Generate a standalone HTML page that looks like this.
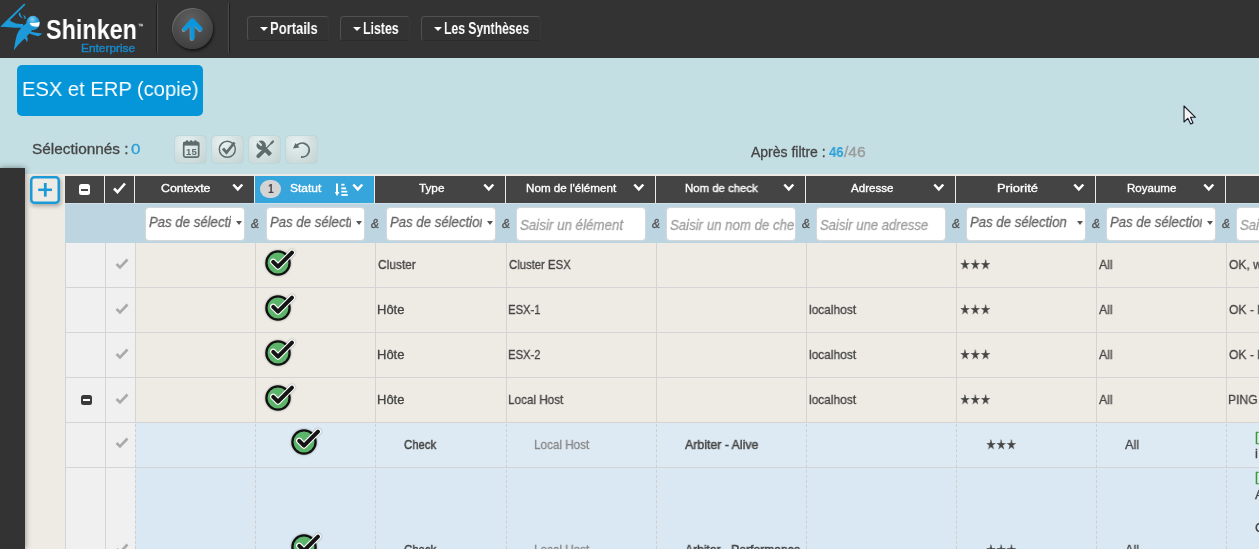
<!DOCTYPE html>
<html><head><meta charset="utf-8">
<style>
*{box-sizing:border-box;margin:0;padding:0}
html,body{width:1259px;height:549px;overflow:hidden;background:#c3dfe3;font-family:"Liberation Sans",sans-serif;color:#444}
.abs{position:absolute}
.tx{position:absolute;white-space:nowrap;line-height:normal;will-change:transform}
#nav{position:absolute;left:0;top:0;width:1259px;height:58px;background:#333}
.sep{position:absolute;top:3px;width:2px;height:50px}
.menu{position:absolute;top:16px;height:25px;border:1px solid #505050;border-bottom-color:#2c2c2c;border-right-color:#383838;border-radius:4px}
.car{position:absolute;width:0;height:0;border-left:4px solid transparent;border-right:4px solid transparent;border-top:4px solid #fff}
#title{position:absolute;left:17px;top:65px;width:186px;height:51px;background:#0596d9;border-radius:5px}
.tbtn{position:absolute;top:136px;width:31px;height:27px;border-radius:4px;background:radial-gradient(ellipse at 35% 25%,#e8f1f1 0%,#d5e1e1 50%,#c4d2d2 100%);box-shadow:0 0 1px rgba(0,0,0,.3)}
#side{position:absolute;left:0;top:168px;width:25px;height:381px;background:#333;box-shadow:0 0 6px rgba(0,0,0,.45)}
#beige{position:absolute;left:25px;top:174px;width:1234px;height:375px;background:#eeebe5}
.th{position:absolute;top:176px;height:27px;background:#444}
.chev{position:absolute;top:183px}
.filt{position:absolute;left:65px;top:203px;width:1194px;height:40px;background:#bdd5e0;border-top:1px solid #d0e0e8}
.inp{position:absolute;top:207px;height:34px;background:#fff;border:1px solid #d4d8da;border-radius:4px;overflow:hidden}
.clip{position:absolute;overflow:hidden;white-space:nowrap}
</style></head><body>
<div id="nav">
  <svg class="abs" style="left:0;top:0" width="46" height="57" viewBox="0 0 46 57">
    <defs><radialGradient id="hg" cx="0.45" cy="0.25" r="0.8"><stop offset="0" stop-color="#8fd0f2"/><stop offset="0.45" stop-color="#1f9ddc"/><stop offset="1" stop-color="#1a92d0"/></radialGradient></defs>
    <g fill="#1c9ad9">
      <path d="M24.2 3.5 L25.4 4.7 L7.5 22.5 L3 26.8 L0.3 26.8 L5 22 Z"/>
      <path d="M5 23 L8.7 19.5 Q12 22.3 16 23.6 Q19.5 24.3 23 24 L24 27.5 Q18 28 12 27.5 Q5 27 0.6 26.8 Z"/>
      <path d="M27 23 Q19.5 27.5 16.8 35 Q15 42 13.7 50.5 Q18.5 44 23 40 Q28 35.5 32 30.5 Z"/>
      <path d="M27.3 30.8 Q35 33 42.3 33.6 Q40.5 35.5 38.3 36.2 Q33 35.5 29.5 33.6 Z"/>
      <path d="M22 34.3 Q26 35 27.5 37.5 Q28.3 40 26.9 42.3 Q26.2 39.5 23.5 37.2 Z"/>
      <path d="M18.7 12.9 Q18.6 16.5 21.5 17.8 L23.5 18.3 Q20.3 16.5 20.2 12.6 Z"/>
      <path d="M23.5 15 Q25.8 15.8 26 18.8 L24.3 18.8 Q24.5 16.8 23.3 15.6Z"/>
    </g>
    <ellipse cx="33" cy="23" rx="6.8" ry="7.2" fill="url(#hg)"/>
    <path d="M29.6 23 Q35 23.3 39.6 22 Q39.6 25.5 38.5 26.6 Q35 26.8 32 26.1 Q30.3 25 29.6 23Z" fill="#fff"/>
  </svg>
  <div class="sep" style="left:156px;background:linear-gradient(90deg,#1e1e1e 50%,#4a4a4a 50%)"></div>
  <div class="sep" style="left:228px;background:linear-gradient(90deg,#4a4a4a 50%,#1e1e1e 50%)"></div>
  <div class="abs" style="left:172px;top:8px;width:41px;height:41px;border-radius:50%;background:radial-gradient(circle at 45% 30%,#606060,#3e3e3e 80%);box-shadow:1px 2px 3px rgba(0,0,0,.6),inset 1px 1px 0 rgba(255,255,255,.14)"></div>
  <svg class="abs" style="left:172px;top:8px" width="41" height="41" viewBox="0 0 41 41">
    <path d="M20.5 30 L20.5 13 M12.5 21 L20.5 12.5 L28.5 21" stroke="#bbb" stroke-width="4.3" fill="none" stroke-linecap="round" stroke-linejoin="round" transform="translate(-0.7,0.9)" opacity=".6"/>
    <path d="M20.5 30 L20.5 13 M12.5 21 L20.5 12.5 L28.5 21" stroke="#0a97dd" stroke-width="4.3" fill="none" stroke-linecap="round" stroke-linejoin="round"/>
  </svg>
  <div class="menu" style="left:247px;width:82px"></div>
  <div class="menu" style="left:340px;width:70px"></div>
  <div class="menu" style="left:421px;width:120px"></div>
  <span class="car" style="left:260px;top:27px"></span>
  <span class="car" style="left:353px;top:27px"></span>
  <span class="car" style="left:434px;top:27px"></span>
</div>

<span class="tx" style="left:46.00px;top:14px;font-size:28px;color:#fff;font-weight:bold;transform:scaleX(0.8348);transform-origin:0 0">Shinken</span>
<span class="tx" style="left:138.00px;top:23px;font-size:6px;color:#ccc;transform:scaleX(0.8333);transform-origin:0 0;-webkit-text-stroke:0.3px #ccc">™</span>
<span class="tx" style="left:81.00px;top:42px;font-size:11px;color:#1a86c4;transform:scaleX(1.0797);transform-origin:0 0;-webkit-text-stroke:0.45px #1a86c4">Enterprise</span>
<span class="tx" style="left:270.19px;top:20px;font-size:16px;color:#fff;font-weight:bold;transform:scaleX(0.8133);transform-origin:0 0">Portails</span>
<span class="tx" style="left:362.93px;top:20px;font-size:16px;color:#fff;font-weight:bold;transform:scaleX(0.7719);transform-origin:0 0">Listes</span>
<span class="tx" style="left:443.64px;top:20px;font-size:16px;color:#fff;font-weight:bold;transform:scaleX(0.7593);transform-origin:0 0">Les Synthèses</span>
<div id="title"></div>
<span class="tx" style="left:22.04px;top:77px;font-size:21px;color:#fff;transform:scaleX(0.9594);transform-origin:0 0">ESX et ERP (copie)</span>
<span class="tx" style="left:32.00px;top:140px;font-size:15px;color:#454545;transform:scaleX(1.0252);transform-origin:0 0;-webkit-text-stroke:0.3px #454545">Sélectionnés :</span>
<span class="tx" style="left:131.20px;top:140px;font-size:15px;color:#2a9fd8;transform:scaleX(1.1250);transform-origin:0 0;-webkit-text-stroke:0.3px #2a9fd8">0</span>
<div class="tbtn" style="left:175px"><svg width="31" height="28" viewBox="0 0 31 28" style="position:absolute;left:0;top:-1px"><rect x="8.7" y="7.3" width="15" height="14.8" rx="1.6" fill="none" stroke="#5e6c6c" stroke-width="1.7"/><rect x="8.2" y="7" width="16" height="3.6" fill="#5e6c6c"/><circle cx="12" cy="6.6" r="1.3" fill="#5e6c6c"/><circle cx="16.2" cy="6.6" r="1.3" fill="#5e6c6c"/><circle cx="20.4" cy="6.6" r="1.3" fill="#5e6c6c"/><text x="16.4" y="19.6" text-anchor="middle" font-family="Liberation Sans" font-weight="bold" font-size="9.5" fill="#5e6c6c" style="will-change:transform">15</text></svg></div>
<div class="tbtn" style="left:212px"><svg width="31" height="28" viewBox="0 0 31 28" style="position:absolute;left:0;top:-1px"><circle cx="15.3" cy="14.3" r="8" fill="none" stroke="#5e6c6c" stroke-width="1.5"/><path d="M11 13.5 L14.5 17.5 L22.5 7.5" fill="none" stroke="#5e6c6c" stroke-width="2.8"/></svg></div>
<div class="tbtn" style="left:249px"><svg width="31" height="28" viewBox="0 0 31 28" style="position:absolute;left:0;top:-1px"><path d="M13 11 L21.5 19.8" stroke="#5e6c6c" stroke-width="4.2"/><circle cx="12.2" cy="10.2" r="4.7" fill="#5e6c6c"/><path d="M8 6 L12 10" stroke="#d6e2e2" stroke-width="2.4" stroke-linecap="round"/><path d="M23.5 7 L16 14.5" stroke="#5e6c6c" stroke-width="1.3"/><path d="M22.3 8.2 L24 6.5" stroke="#5e6c6c" stroke-width="2.2" stroke-linecap="round"/><path d="M16.2 14.5 L9.3 21.2" stroke="#5e6c6c" stroke-width="3.8" stroke-linecap="round"/></svg></div>
<div class="tbtn" style="left:286px"><svg width="31" height="28" viewBox="0 0 31 28" style="position:absolute;left:0;top:-1px"><path d="M10.5 11 A7 7 0 1 1 15 22" fill="none" stroke="#5e6c6c" stroke-width="1.8"/><path d="M7 13.5 L9.5 8 L13.5 12.5 Z" fill="#5e6c6c"/></svg></div>
<span class="tx" style="left:751.00px;top:144px;font-size:14px;color:#454545;-webkit-text-stroke:0.3px #454545">Après filtre :</span>
<span class="tx" style="left:829.00px;top:144px;font-size:14px;color:#2a9fd8;font-weight:bold;transform:scaleX(0.9375);transform-origin:0 0">46</span>
<span class="tx" style="left:844.00px;top:144px;font-size:14px;color:#9a9a9a;transform:scaleX(1.1181);transform-origin:0 0;-webkit-text-stroke:0.3px #9a9a9a">/46</span>
<svg class="abs" style="left:1182.5px;top:104.5px" width="15" height="22" viewBox="0 0 15 22">
  <path d="M1 1 L1 17 L4.8 13.3 L7.6 19 L10 18 L7.5 12.3 L12.5 12.3 Z" fill="#f4f4f4" stroke="#1a1a2a" stroke-width="1.1" stroke-linejoin="round"/>
</svg>
<div id="beige"></div><div id="side"></div>
<div class="abs" style="left:30px;top:176px;width:30px;height:28px;border-radius:4px;background:#eeebe5;box-shadow:1px 2px 4px rgba(0,0,0,.3)"></div>
<svg class="abs" style="left:30px;top:176px" width="30" height="28" viewBox="0 0 30 28"><rect x="1.25" y="1.25" width="27.5" height="25.5" rx="3" fill="none" stroke="#1a9ad6" stroke-width="2.5"/><path d="M8.2 13.8 L22 13.8" stroke="#1a9ad6" stroke-width="2.5"/><path d="M15.3 7 L15.3 20.6" stroke="#1a9ad6" stroke-width="2.8"/></svg>
<div class="th" style="left:65px;width:39px;background:#444"></div>
<div class="th" style="left:105px;width:29px;background:#444"></div>
<div class="th" style="left:135px;width:119px;background:#444"></div>
<div class="th" style="left:255px;width:119px;background:#35a5dc"></div>
<div class="th" style="left:375px;width:130px;background:#444"></div>
<div class="th" style="left:506px;width:149px;background:#444"></div>
<div class="th" style="left:656px;width:149px;background:#444"></div>
<div class="th" style="left:806px;width:149px;background:#444"></div>
<div class="th" style="left:956px;width:139px;background:#444"></div>
<div class="th" style="left:1096px;width:129px;background:#444"></div>
<div class="th" style="left:1226px;width:33px;background:#444"></div>
<span class="tx" style="left:161.00px;top:182px;font-size:11.5px;color:#fff;transform:scaleX(1.0738);transform-origin:0 0;-webkit-text-stroke:0.35px #fff">Contexte</span>
<span class="tx" style="left:290.40px;top:182px;font-size:11.5px;color:#fff;transform:scaleX(1.0437);transform-origin:0 0;-webkit-text-stroke:0.35px #fff">Statut</span>
<span class="tx" style="left:419.00px;top:182px;font-size:11.5px;color:#fff;transform:scaleX(1.0189);transform-origin:0 0;-webkit-text-stroke:0.35px #fff">Type</span>
<span class="tx" style="left:526.00px;top:182px;font-size:11.5px;color:#fff;transform:scaleX(1.0119);transform-origin:0 0;-webkit-text-stroke:0.35px #fff">Nom de l'élément</span>
<span class="tx" style="left:685.00px;top:182px;font-size:11.5px;color:#fff;transform:scaleX(0.9898);transform-origin:0 0;-webkit-text-stroke:0.35px #fff">Nom de check</span>
<span class="tx" style="left:851.00px;top:182px;font-size:11.5px;color:#fff;transform:scaleX(1.0050);transform-origin:0 0;-webkit-text-stroke:0.35px #fff">Adresse</span>
<span class="tx" style="left:996.60px;top:182px;font-size:11.5px;color:#fff;transform:scaleX(1.1241);transform-origin:0 0;-webkit-text-stroke:0.35px #fff">Priorité</span>
<span class="tx" style="left:1127.00px;top:182px;font-size:11.5px;color:#fff;transform:scaleX(1.0037);transform-origin:0 0;-webkit-text-stroke:0.35px #fff">Royaume</span>
<svg class="chev" style="left:232.0px" width="12" height="9" viewBox="0 0 12 9"><path d="M1.3 1.5 L5.8 6.3 L10.3 1.5" stroke="#fff" stroke-width="2.5" fill="none"/></svg>
<svg class="chev" style="left:352.1px" width="12" height="9" viewBox="0 0 12 9"><path d="M1.3 1.5 L5.8 6.3 L10.3 1.5" stroke="#fff" stroke-width="2.5" fill="none"/></svg>
<svg class="chev" style="left:483.0px" width="12" height="9" viewBox="0 0 12 9"><path d="M1.3 1.5 L5.8 6.3 L10.3 1.5" stroke="#fff" stroke-width="2.5" fill="none"/></svg>
<svg class="chev" style="left:632.7px" width="12" height="9" viewBox="0 0 12 9"><path d="M1.3 1.5 L5.8 6.3 L10.3 1.5" stroke="#fff" stroke-width="2.5" fill="none"/></svg>
<svg class="chev" style="left:783.2px" width="12" height="9" viewBox="0 0 12 9"><path d="M1.3 1.5 L5.8 6.3 L10.3 1.5" stroke="#fff" stroke-width="2.5" fill="none"/></svg>
<svg class="chev" style="left:932.7px" width="12" height="9" viewBox="0 0 12 9"><path d="M1.3 1.5 L5.8 6.3 L10.3 1.5" stroke="#fff" stroke-width="2.5" fill="none"/></svg>
<svg class="chev" style="left:1072.9px" width="12" height="9" viewBox="0 0 12 9"><path d="M1.3 1.5 L5.8 6.3 L10.3 1.5" stroke="#fff" stroke-width="2.5" fill="none"/></svg>
<svg class="chev" style="left:1202.5px" width="12" height="9" viewBox="0 0 12 9"><path d="M1.3 1.5 L5.8 6.3 L10.3 1.5" stroke="#fff" stroke-width="2.5" fill="none"/></svg>
<div class="abs" style="left:79px;top:184px;width:11px;height:11px;background:#fff;border-radius:2.5px"><div class="abs" style="left:2px;top:4.5px;width:7px;height:2px;background:#444"></div></div>
<svg class="abs" style="left:112px;top:181px" width="15" height="14" viewBox="0 0 15 14"><path d="M2 7.5 L5.5 11 L13 2.5" stroke="#fff" stroke-width="2.6" fill="none"/></svg>
<div class="abs" style="left:260px;top:180px;width:21px;height:18px;border-radius:9px;background:#d4d4d4"></div>
<span class="tx" style="left:268.00px;top:181px;font-size:13px;color:#444;font-weight:bold;transform:scaleX(0.8000);transform-origin:0 0">1</span>
<svg class="abs" style="left:334px;top:183px" width="16" height="14" viewBox="0 0 16 14"><path d="M3 0.6 L3 10" stroke="#fff" stroke-width="2"/><path d="M0.8 9 L3 13 L5.4 9 Z" fill="#fff"/><rect x="7.3" y="0.8" width="3.2" height="1.8" fill="#fff"/><rect x="7.3" y="4.4" width="4.7" height="1.9" fill="#fff"/><rect x="7.3" y="7.8" width="6" height="1.7" fill="#fff"/><rect x="7.3" y="11.1" width="6.5" height="1.8" fill="#fff"/></svg>
<div class="filt"></div>
<div class="inp" style="left:145px;width:100px"></div>
<div class="clip" style="left:146px;top:208px;width:85px;height:31px"><span class="tx" style="left:2.50px;top:6px;font-size:14px;color:#666;font-style:italic;transform:scaleX(0.9420);transform-origin:0 0;-webkit-text-stroke:0.3px #666">Pas de sélection</span></div>
<span class="car" style="left:235.6px;top:221px;border-left-width:3.8px;border-right-width:3.8px;border-top:4.6px solid #555"></span>
<div class="inp" style="left:266px;width:99px"></div>
<div class="clip" style="left:267px;top:208px;width:84px;height:31px"><span class="tx" style="left:2.50px;top:6px;font-size:14px;color:#666;font-style:italic;transform:scaleX(0.9420);transform-origin:0 0;-webkit-text-stroke:0.3px #666">Pas de sélection</span></div>
<span class="car" style="left:355.6px;top:221px;border-left-width:3.8px;border-right-width:3.8px;border-top:4.6px solid #555"></span>
<div class="inp" style="left:386px;width:110px"></div>
<div class="clip" style="left:387px;top:208px;width:95px;height:31px"><span class="tx" style="left:2.50px;top:6px;font-size:14px;color:#666;font-style:italic;transform:scaleX(0.9420);transform-origin:0 0;-webkit-text-stroke:0.3px #666">Pas de sélection</span></div>
<span class="car" style="left:486.6px;top:221px;border-left-width:3.8px;border-right-width:3.8px;border-top:4.6px solid #555"></span>
<div class="inp" style="left:516px;width:130px"></div>
<div class="clip" style="left:517px;top:208px;width:127px;height:31px"><span class="tx" style="left:2.50px;top:9px;font-size:14px;color:#a0a0a0;font-style:italic;transform:scaleX(0.9530);transform-origin:0 0;-webkit-text-stroke:0.3px #a0a0a0">Saisir un élément</span></div>
<div class="inp" style="left:666px;width:130px"></div>
<div class="clip" style="left:667px;top:208px;width:127px;height:31px"><span class="tx" style="left:2.50px;top:9px;font-size:14px;color:#a0a0a0;font-style:italic;transform:scaleX(0.9450);transform-origin:0 0;-webkit-text-stroke:0.3px #a0a0a0">Saisir un nom de check</span></div>
<div class="inp" style="left:816px;width:130px"></div>
<div class="clip" style="left:817px;top:208px;width:127px;height:31px"><span class="tx" style="left:2.50px;top:9px;font-size:14px;color:#a0a0a0;font-style:italic;transform:scaleX(0.9320);transform-origin:0 0;-webkit-text-stroke:0.3px #a0a0a0">Saisir une adresse</span></div>
<div class="inp" style="left:966px;width:120px"></div>
<div class="clip" style="left:967px;top:208px;width:105px;height:31px"><span class="tx" style="left:2.50px;top:6px;font-size:14px;color:#666;font-style:italic;transform:scaleX(0.9420);transform-origin:0 0;-webkit-text-stroke:0.3px #666">Pas de sélection</span></div>
<span class="car" style="left:1076.6px;top:221px;border-left-width:3.8px;border-right-width:3.8px;border-top:4.6px solid #555"></span>
<div class="inp" style="left:1106px;width:110px"></div>
<div class="clip" style="left:1107px;top:208px;width:95px;height:31px"><span class="tx" style="left:2.50px;top:6px;font-size:14px;color:#666;font-style:italic;transform:scaleX(0.9420);transform-origin:0 0;-webkit-text-stroke:0.3px #666">Pas de sélection</span></div>
<span class="car" style="left:1206.6px;top:221px;border-left-width:3.8px;border-right-width:3.8px;border-top:4.6px solid #555"></span>
<div class="inp" style="left:1236px;width:65px"></div>
<div class="clip" style="left:1237px;top:208px;width:62px;height:31px"><span class="tx" style="left:2.50px;top:9px;font-size:14px;color:#a0a0a0;font-style:italic;transform:scaleX(0.9450);transform-origin:0 0;-webkit-text-stroke:0.3px #a0a0a0">Saisir un message</span></div>
<span class="tx" style="left:251.00px;top:217px;font-size:12px;color:#555;font-style:italic;-webkit-text-stroke:0.3px #555">&amp;</span>
<span class="tx" style="left:371.00px;top:217px;font-size:12px;color:#555;font-style:italic;-webkit-text-stroke:0.3px #555">&amp;</span>
<span class="tx" style="left:502.00px;top:217px;font-size:12px;color:#555;font-style:italic;-webkit-text-stroke:0.3px #555">&amp;</span>
<span class="tx" style="left:652.00px;top:217px;font-size:12px;color:#555;font-style:italic;-webkit-text-stroke:0.3px #555">&amp;</span>
<span class="tx" style="left:802.00px;top:217px;font-size:12px;color:#555;font-style:italic;-webkit-text-stroke:0.3px #555">&amp;</span>
<span class="tx" style="left:952.00px;top:217px;font-size:12px;color:#555;font-style:italic;-webkit-text-stroke:0.3px #555">&amp;</span>
<span class="tx" style="left:1092.00px;top:217px;font-size:12px;color:#555;font-style:italic;-webkit-text-stroke:0.3px #555">&amp;</span>
<span class="tx" style="left:1222.00px;top:217px;font-size:12px;color:#555;font-style:italic;-webkit-text-stroke:0.3px #555">&amp;</span>
<div class="abs" style="left:65px;top:243px;width:1194px;height:45px;background:#eeebe5;border-bottom:1px solid #d4d4d4"></div>
<div class="abs" style="left:65px;top:243px;width:70px;height:45px;background:#f0f0f0;border-bottom:1px solid #d4d4d4"></div>
<div class="abs" style="left:65px;top:288px;width:1194px;height:45px;background:#eeebe5;border-bottom:1px solid #d4d4d4"></div>
<div class="abs" style="left:65px;top:288px;width:70px;height:45px;background:#f0f0f0;border-bottom:1px solid #d4d4d4"></div>
<div class="abs" style="left:65px;top:333px;width:1194px;height:45px;background:#eeebe5;border-bottom:1px solid #d4d4d4"></div>
<div class="abs" style="left:65px;top:333px;width:70px;height:45px;background:#f0f0f0;border-bottom:1px solid #d4d4d4"></div>
<div class="abs" style="left:65px;top:378px;width:1194px;height:45px;background:#eeebe5;border-bottom:1px solid #d4d4d4"></div>
<div class="abs" style="left:65px;top:378px;width:70px;height:45px;background:#f0f0f0;border-bottom:1px solid #d4d4d4"></div>
<div class="abs" style="left:65px;top:423px;width:1194px;height:45px;background:#deeaf3;border-bottom:1px solid #d4d4d4"></div>
<div class="abs" style="left:65px;top:423px;width:70px;height:45px;background:#f0f0f0;border-bottom:1px solid #d4d4d4"></div>
<div class="abs" style="left:65px;top:468px;width:1194px;height:81px;background:#d9e8f3;"></div>
<div class="abs" style="left:65px;top:468px;width:70px;height:81px;background:#f0f0f0;"></div>
<div class="abs" style="left:65px;top:243px;width:1px;height:306px;background:#d4d4d4"></div>
<div class="abs" style="left:105px;top:243px;width:1px;height:306px;background:#d4d4d4"></div>
<div class="abs" style="left:135px;top:243px;width:1px;height:180px;background:#d4d4d4"></div>
<div class="abs" style="left:135px;top:424px;width:0;height:125px;border-left:1px dashed #cfcfcf"></div>
<div class="abs" style="left:255px;top:243px;width:1px;height:180px;background:#d4d4d4"></div>
<div class="abs" style="left:255px;top:424px;width:0;height:125px;border-left:1px dashed #cfcfcf"></div>
<div class="abs" style="left:375px;top:243px;width:1px;height:180px;background:#d4d4d4"></div>
<div class="abs" style="left:375px;top:424px;width:0;height:125px;border-left:1px dashed #cfcfcf"></div>
<div class="abs" style="left:506px;top:243px;width:1px;height:180px;background:#d4d4d4"></div>
<div class="abs" style="left:506px;top:424px;width:0;height:125px;border-left:1px dashed #cfcfcf"></div>
<div class="abs" style="left:656px;top:243px;width:1px;height:180px;background:#d4d4d4"></div>
<div class="abs" style="left:656px;top:424px;width:0;height:125px;border-left:1px dashed #cfcfcf"></div>
<div class="abs" style="left:806px;top:243px;width:1px;height:180px;background:#d4d4d4"></div>
<div class="abs" style="left:806px;top:424px;width:0;height:125px;border-left:1px dashed #cfcfcf"></div>
<div class="abs" style="left:956px;top:243px;width:1px;height:180px;background:#d4d4d4"></div>
<div class="abs" style="left:956px;top:424px;width:0;height:125px;border-left:1px dashed #cfcfcf"></div>
<div class="abs" style="left:1096px;top:243px;width:1px;height:180px;background:#d4d4d4"></div>
<div class="abs" style="left:1096px;top:424px;width:0;height:125px;border-left:1px dashed #cfcfcf"></div>
<div class="abs" style="left:1226px;top:243px;width:1px;height:180px;background:#d4d4d4"></div>
<div class="abs" style="left:1226px;top:424px;width:0;height:125px;border-left:1px dashed #cfcfcf"></div>
<svg class="abs" style="left:114.7px;top:257.8px" width="14" height="12" viewBox="0 0 14 12"><path d="M1.5 6 L5 9.5 L12.5 1.5" stroke="#aaa" stroke-width="2.6" fill="none"/></svg>
<svg class="abs" style="left:265.3px;top:246.8px;filter:drop-shadow(0 0.5px 1px rgba(0,0,0,.35))" width="34" height="32" viewBox="0 0 34 32"><circle cx="13" cy="16" r="11.6" fill="#5db46b" stroke="#111" stroke-width="2.3"/><path d="M8.2 14.8 L13 19.6 L27 5.6" stroke="#fff" stroke-width="6.2" fill="none" stroke-linecap="round" stroke-linejoin="round"/><path d="M8.2 14.8 L13 19.6 L27 5.6" stroke="#141414" stroke-width="4" fill="none" stroke-linecap="round" stroke-linejoin="round"/></svg>
<span class="tx" style="left:378.00px;top:257px;font-size:13px;color:#444;transform:scaleX(0.9200);transform-origin:0 0;-webkit-text-stroke:0.3px #444">Cluster</span>
<span class="tx" style="left:509.00px;top:257px;font-size:13px;color:#444;transform:scaleX(0.8716);transform-origin:0 0;-webkit-text-stroke:0.3px #444">Cluster ESX</span>
<span class="tx" style="left:959.70px;top:257px;font-size:13px;color:#444;transform:scaleX(0.8571);transform-origin:0 0;-webkit-text-stroke:0.3px #444">★★★</span>
<span class="tx" style="left:1099.00px;top:257px;font-size:13px;color:#444;transform:scaleX(0.9479);transform-origin:0 0;-webkit-text-stroke:0.3px #444">All</span>
<div class="clip" style="left:1227px;top:254px;width:32px;height:20px"><span class="tx" style="left:2.00px;top:3px;font-size:13px;color:#444;transform:scaleX(0.9300);transform-origin:0 0;-webkit-text-stroke:0.3px #444">OK, w</span></div>
<svg class="abs" style="left:114.7px;top:302.8px" width="14" height="12" viewBox="0 0 14 12"><path d="M1.5 6 L5 9.5 L12.5 1.5" stroke="#aaa" stroke-width="2.6" fill="none"/></svg>
<svg class="abs" style="left:265.3px;top:291.8px;filter:drop-shadow(0 0.5px 1px rgba(0,0,0,.35))" width="34" height="32" viewBox="0 0 34 32"><circle cx="13" cy="16" r="11.6" fill="#5db46b" stroke="#111" stroke-width="2.3"/><path d="M8.2 14.8 L13 19.6 L27 5.6" stroke="#fff" stroke-width="6.2" fill="none" stroke-linecap="round" stroke-linejoin="round"/><path d="M8.2 14.8 L13 19.6 L27 5.6" stroke="#141414" stroke-width="4" fill="none" stroke-linecap="round" stroke-linejoin="round"/></svg>
<span class="tx" style="left:377.00px;top:302px;font-size:13px;color:#444;-webkit-text-stroke:0.3px #444">Hôte</span>
<span class="tx" style="left:508.13px;top:302px;font-size:13px;color:#444;transform:scaleX(0.8668);transform-origin:0 0;-webkit-text-stroke:0.3px #444">ESX-1</span>
<span class="tx" style="left:809.00px;top:302px;font-size:13px;color:#444;transform:scaleX(0.9169);transform-origin:0 0;-webkit-text-stroke:0.3px #444">localhost</span>
<span class="tx" style="left:959.70px;top:302px;font-size:13px;color:#444;transform:scaleX(0.8571);transform-origin:0 0;-webkit-text-stroke:0.3px #444">★★★</span>
<span class="tx" style="left:1099.00px;top:302px;font-size:13px;color:#444;transform:scaleX(0.9479);transform-origin:0 0;-webkit-text-stroke:0.3px #444">All</span>
<div class="clip" style="left:1227px;top:299px;width:32px;height:20px"><span class="tx" style="left:2.00px;top:3px;font-size:13px;color:#444;transform:scaleX(0.9300);transform-origin:0 0;-webkit-text-stroke:0.3px #444">OK - l</span></div>
<svg class="abs" style="left:114.7px;top:347.8px" width="14" height="12" viewBox="0 0 14 12"><path d="M1.5 6 L5 9.5 L12.5 1.5" stroke="#aaa" stroke-width="2.6" fill="none"/></svg>
<svg class="abs" style="left:265.3px;top:336.8px;filter:drop-shadow(0 0.5px 1px rgba(0,0,0,.35))" width="34" height="32" viewBox="0 0 34 32"><circle cx="13" cy="16" r="11.6" fill="#5db46b" stroke="#111" stroke-width="2.3"/><path d="M8.2 14.8 L13 19.6 L27 5.6" stroke="#fff" stroke-width="6.2" fill="none" stroke-linecap="round" stroke-linejoin="round"/><path d="M8.2 14.8 L13 19.6 L27 5.6" stroke="#141414" stroke-width="4" fill="none" stroke-linecap="round" stroke-linejoin="round"/></svg>
<span class="tx" style="left:377.00px;top:347px;font-size:13px;color:#444;-webkit-text-stroke:0.3px #444">Hôte</span>
<span class="tx" style="left:508.13px;top:347px;font-size:13px;color:#444;transform:scaleX(0.8668);transform-origin:0 0;-webkit-text-stroke:0.3px #444">ESX-2</span>
<span class="tx" style="left:809.00px;top:347px;font-size:13px;color:#444;transform:scaleX(0.9169);transform-origin:0 0;-webkit-text-stroke:0.3px #444">localhost</span>
<span class="tx" style="left:959.70px;top:347px;font-size:13px;color:#444;transform:scaleX(0.8571);transform-origin:0 0;-webkit-text-stroke:0.3px #444">★★★</span>
<span class="tx" style="left:1099.00px;top:347px;font-size:13px;color:#444;transform:scaleX(0.9479);transform-origin:0 0;-webkit-text-stroke:0.3px #444">All</span>
<div class="clip" style="left:1227px;top:344px;width:32px;height:20px"><span class="tx" style="left:2.00px;top:3px;font-size:13px;color:#444;transform:scaleX(0.9300);transform-origin:0 0;-webkit-text-stroke:0.3px #444">OK - l</span></div>
<svg class="abs" style="left:114.7px;top:392.8px" width="14" height="12" viewBox="0 0 14 12"><path d="M1.5 6 L5 9.5 L12.5 1.5" stroke="#aaa" stroke-width="2.6" fill="none"/></svg>
<svg class="abs" style="left:265.3px;top:381.8px;filter:drop-shadow(0 0.5px 1px rgba(0,0,0,.35))" width="34" height="32" viewBox="0 0 34 32"><circle cx="13" cy="16" r="11.6" fill="#5db46b" stroke="#111" stroke-width="2.3"/><path d="M8.2 14.8 L13 19.6 L27 5.6" stroke="#fff" stroke-width="6.2" fill="none" stroke-linecap="round" stroke-linejoin="round"/><path d="M8.2 14.8 L13 19.6 L27 5.6" stroke="#141414" stroke-width="4" fill="none" stroke-linecap="round" stroke-linejoin="round"/></svg>
<span class="tx" style="left:377.00px;top:392px;font-size:13px;color:#444;-webkit-text-stroke:0.3px #444">Hôte</span>
<span class="tx" style="left:508.10px;top:392px;font-size:13px;color:#444;transform:scaleX(0.9012);transform-origin:0 0;-webkit-text-stroke:0.3px #444">Local Host</span>
<span class="tx" style="left:809.00px;top:392px;font-size:13px;color:#444;transform:scaleX(0.9169);transform-origin:0 0;-webkit-text-stroke:0.3px #444">localhost</span>
<span class="tx" style="left:959.70px;top:392px;font-size:13px;color:#444;transform:scaleX(0.8571);transform-origin:0 0;-webkit-text-stroke:0.3px #444">★★★</span>
<span class="tx" style="left:1099.00px;top:392px;font-size:13px;color:#444;transform:scaleX(0.9479);transform-origin:0 0;-webkit-text-stroke:0.3px #444">All</span>
<div class="clip" style="left:1227px;top:389px;width:32px;height:20px"><span class="tx" style="left:1.07px;top:3px;font-size:13px;color:#444;transform:scaleX(0.9300);transform-origin:0 0;-webkit-text-stroke:0.3px #444">PING</span></div>
<div class="abs" style="left:81px;top:394.5px;width:10.5px;height:10.5px;background:#3a3a3a;border-radius:2.5px"><div class="abs" style="left:2px;top:4.2px;width:6.5px;height:2px;background:#fff"></div></div>
<svg class="abs" style="left:114.7px;top:436.7px" width="14" height="12" viewBox="0 0 14 12"><path d="M1.5 6 L5 9.5 L12.5 1.5" stroke="#aaa" stroke-width="2.6" fill="none"/></svg>
<svg class="abs" style="left:290.8px;top:426.4px;filter:drop-shadow(0 0.5px 1px rgba(0,0,0,.35))" width="34" height="32" viewBox="0 0 34 32"><circle cx="13" cy="16" r="11.6" fill="#5db46b" stroke="#111" stroke-width="2.3"/><path d="M8.2 14.8 L13 19.6 L27 5.6" stroke="#fff" stroke-width="6.2" fill="none" stroke-linecap="round" stroke-linejoin="round"/><path d="M8.2 14.8 L13 19.6 L27 5.6" stroke="#141414" stroke-width="4" fill="none" stroke-linecap="round" stroke-linejoin="round"/></svg>
<span class="tx" style="left:404.00px;top:437px;font-size:13px;color:#444;transform:scaleX(0.8755);transform-origin:0 0;-webkit-text-stroke:0.45px #444">Check</span>
<span class="tx" style="left:534.40px;top:437px;font-size:13px;color:#888;transform:scaleX(0.8996);transform-origin:0 0;-webkit-text-stroke:0.3px #888">Local Host</span>
<span class="tx" style="left:684.80px;top:437px;font-size:13px;color:#444;transform:scaleX(0.9500);transform-origin:0 0;-webkit-text-stroke:0.45px #444">Arbiter - Alive</span>
<span class="tx" style="left:985.70px;top:437px;font-size:13px;color:#444;transform:scaleX(0.8514);transform-origin:0 0;-webkit-text-stroke:0.3px #444">★★★</span>
<span class="tx" style="left:1125.00px;top:437px;font-size:13px;color:#444;transform:scaleX(0.9753);transform-origin:0 0;-webkit-text-stroke:0.3px #444">All</span>
<svg class="abs" style="left:114.7px;top:542.8px" width="14" height="12" viewBox="0 0 14 12"><path d="M1.5 6 L5 9.5 L12.5 1.5" stroke="#aaa" stroke-width="2.6" fill="none"/></svg>
<svg class="abs" style="left:290.8px;top:531.0px;filter:drop-shadow(0 0.5px 1px rgba(0,0,0,.35))" width="34" height="32" viewBox="0 0 34 32"><circle cx="13" cy="16" r="11.6" fill="#5db46b" stroke="#111" stroke-width="2.3"/><path d="M8.2 14.8 L13 19.6 L27 5.6" stroke="#fff" stroke-width="6.2" fill="none" stroke-linecap="round" stroke-linejoin="round"/><path d="M8.2 14.8 L13 19.6 L27 5.6" stroke="#141414" stroke-width="4" fill="none" stroke-linecap="round" stroke-linejoin="round"/></svg>
<span class="tx" style="left:404.00px;top:542px;font-size:13px;color:#444;transform:scaleX(0.8755);transform-origin:0 0;-webkit-text-stroke:0.45px #444">Check</span>
<span class="tx" style="left:534.40px;top:542px;font-size:13px;color:#888;transform:scaleX(0.8996);transform-origin:0 0;-webkit-text-stroke:0.3px #888">Local Host</span>
<span class="tx" style="left:684.80px;top:542px;font-size:13px;color:#444;transform:scaleX(0.9288);transform-origin:0 0;-webkit-text-stroke:0.45px #444">Arbiter - Performance</span>
<span class="tx" style="left:985.70px;top:542px;font-size:13px;color:#444;transform:scaleX(0.8514);transform-origin:0 0;-webkit-text-stroke:0.3px #444">★★★</span>
<span class="tx" style="left:1125.00px;top:542px;font-size:13px;color:#444;transform:scaleX(0.9753);transform-origin:0 0;-webkit-text-stroke:0.3px #444">All</span>
<span class="tx" style="left:1255.00px;top:429px;font-size:13px;color:#3a9a3a;-webkit-text-stroke:0.3px #3a9a3a">[</span>
<span class="tx" style="left:1255.00px;top:446px;font-size:13px;color:#444;-webkit-text-stroke:0.3px #444">i</span>
<span class="tx" style="left:1255.00px;top:469px;font-size:13px;color:#3a9a3a;-webkit-text-stroke:0.3px #3a9a3a">[</span>
<span class="tx" style="left:1255.00px;top:487px;font-size:13px;color:#444;-webkit-text-stroke:0.3px #444">A</span>
<span class="tx" style="left:1255.00px;top:520px;font-size:13px;color:#444;-webkit-text-stroke:0.3px #444">C</span>
</body></html>
